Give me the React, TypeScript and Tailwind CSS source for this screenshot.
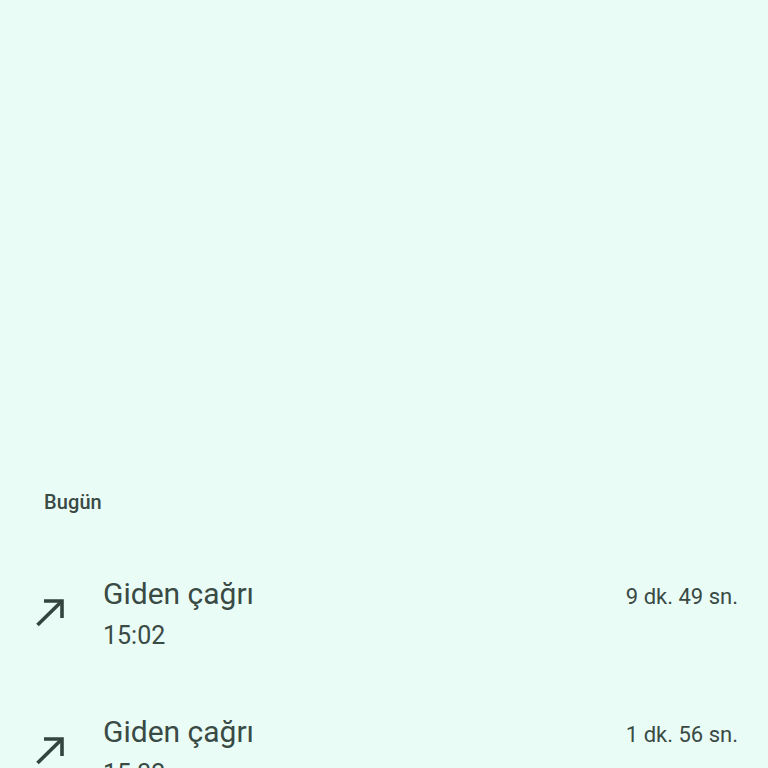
import React from "react";

function Arrow() {
  return (
    <svg width="30" height="30" viewBox="0 0 30 30" fill="none" stroke="#34443f" strokeWidth="3.6" strokeLinecap="butt">
      <line x1="2.5" y1="27" x2="26.5" y2="3.5" />
      <polyline points="9,3 27,3 27,20" />
    </svg>
  );
}

function Row({ time, dur }: { time: string; dur: string }) {
  return (
    <div className="flex items-center pl-[35px] pr-[30px]">
      <div className="shrink-0 mt-[-2px]">
        <Arrow />
      </div>
      <div className="ml-[38px] flex-1 flex flex-col">
        <div className="flex items-baseline justify-between">
          <span className="text-[30px] leading-[45px] text-[#3a4a45]">Giden çağrı</span>
          <span className="text-[22px] text-[#3a4a45]">{dur}</span>
        </div>
        <span className="text-[25px] leading-[40px] text-[#3a4a45]">{time}</span>
      </div>
    </div>
  );
}

export default function App() {
  return (
    <div
      className="w-[768px] h-[768px] overflow-hidden bg-[#e9fdf6] flex flex-col"
      style={{ fontFamily: "Roboto, 'Open Sans', sans-serif" }}
    >
      <div className="pt-[490px] pl-[44px] text-[20px] leading-[25px] text-[#3a4a45] font-medium tracking-[0.1px]">Bugün</div>
      <div className="mt-[56px] flex flex-col gap-[53px]">
        <Row time="15:02" dur="9 dk. 49 sn." />
        <Row time="15:32" dur="1 dk. 56 sn." />
      </div>
    </div>
  );
}
